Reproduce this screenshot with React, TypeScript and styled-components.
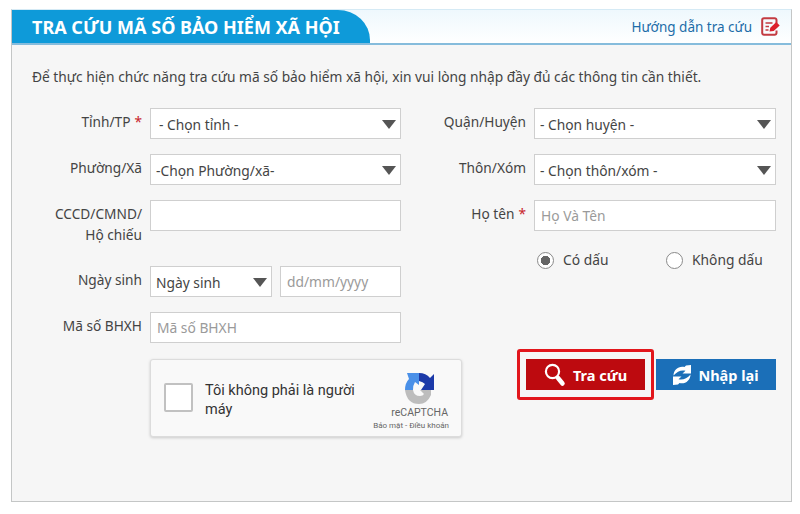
import React from 'react';
import styled, { createGlobalStyle } from 'styled-components';

const GlobalStyle = createGlobalStyle`
  html, body { margin: 0; padding: 0; background: #fff; }
  body { font-family: "Noto Sans", "Liberation Sans", sans-serif; color: #444; }
  * { box-sizing: border-box; }
`;

const Panel = styled.section`
  width: 781px;
  height: 493px;
  margin: 9px 0 0 11px;
  border: 1px solid #c4c6c6;
  border-top-color: #d5eaf5;
  background: #f6f6f6;
`;

const Header = styled.header`
  height: 33px;
  display: flex;
  justify-content: space-between;
  align-items: stretch;
  border-bottom: 2px solid #86bcdc;
  background: linear-gradient(#eef8fd, #ffffff);
  box-sizing: content-box;
`;

const Tab = styled.h1`
  width: 358px;
  margin: 0;
  padding-left: 20px;
  display: flex;
  align-items: center;
  background: #0e9ad9;
  border-top-right-radius: 32px 30px;
  color: #fff;
  font-size: 18px;
  font-weight: 700;
`;

const Guide = styled.a`
  display: flex;
  align-items: center;
  gap: 9px;
  padding-right: 11px;
  color: #1c6ca8;
  font-size: 13.5px;
`;

const Body = styled.div`
  padding: 22px 15px 0 20px;
`;

const Intro = styled.p`
  margin: 0 0 21px;
  height: 20px;
  font-size: 13.75px;
  line-height: 20px;
  color: #444;
`;

const Columns = styled.div`
  display: grid;
  grid-template-columns: 369px 375px;
`;

const Column = styled.div`
  display: flex;
  flex-direction: column;
  gap: 15px;
`;

const Row = styled.div<{ $label: number; $tall?: boolean }>`
  display: grid;
  grid-template-columns: ${(p) => p.$label}px 1fr;
  column-gap: 8px;
  height: ${(p) => (p.$tall ? 51 : 31)}px;
`;

const Label = styled.label`
  text-align: right;
  font-size: 13.7px;
  line-height: 21px;
  padding-top: 3px;
  color: #444;
`;

const Required = styled.span`
  color: #c8242b;
  margin-left: 4px;
`;

const TextInput = styled.input`
  width: 100%;
  height: 31px;
  padding: 0 6px;
  border: 1px solid #cfcfcf;
  background: #fff;
  font: 13.8px "Noto Sans", sans-serif;
  color: #444;
  outline: none;
  &::placeholder { color: #9a9a9a; opacity: 1; }
`;

const SelectWrap = styled.div`
  position: relative;
  height: 31px;
  &::after {
    content: '';
    position: absolute;
    right: 5px;
    top: 12px;
    border-left: 7.5px solid transparent;
    border-right: 7.5px solid transparent;
    border-top: 9px solid #555;
    pointer-events: none;
  }
`;

const Select = styled.select<{ $inset?: number }>`
  width: 100%;
  height: 31px;
  padding: 1px ${(p) => p.$inset ?? 5}px 0;
  appearance: none;
  border: 1px solid #cfcfcf;
  border-radius: 0;
  background: #fff;
  font: 13.8px "Noto Sans", sans-serif;
  color: #444;
`;

const DateFields = styled.div`
  display: grid;
  grid-template-columns: 122px 121px;
  column-gap: 8px;
`;

const Captcha = styled.div`
  width: 312px;
  height: 78px;
  margin: 1px 0 0 118px;
  display: flex;
  align-items: flex-start;
  padding: 0 12px 0 13px;
  background: #f9f9f9;
  border: 1px solid #dcdcdc;
  border-radius: 3px;
  box-shadow: 0 1px 3px rgba(0, 0, 0, 0.18);
`;

const CaptchaBox = styled.span`
  flex: none;
  width: 29px;
  height: 29px;
  margin-top: 23px;
  background: #fff;
  border: 2px solid #c1c1c1;
  border-radius: 2px;
`;

const CaptchaText = styled.span`
  width: 160px;
  flex: none;
  margin: 21px 0 0 12px;
  font: 14.5px/19px Roboto, "Liberation Sans", sans-serif;
  color: #333;
`;

const CaptchaBrand = styled.div`
  flex: 1;
  display: flex;
  flex-direction: column;
  align-items: flex-end;
  margin-top: 12px;
  color: #666;
`;

const BrandLogo = styled.svg`
  margin-right: 13px;
`;

const BrandName = styled.span`
  font: 10.5px/13px Roboto, "Liberation Sans", sans-serif;
  margin: 1px 1px 0 0;
`;

const BrandLinks = styled.span`
  font: 8px/10px Roboto, "Liberation Sans", sans-serif;
  margin-top: 2px;
  white-space: nowrap;
`;

const RadioRow = styled.div`
  display: flex;
  height: 22px;
  margin: 3px 0 0 136px;
  font-size: 13.8px;
  line-height: 22px;
`;

const RadioOption = styled.span<{ $width: number }>`
  display: flex;
  align-items: center;
  gap: 9px;
  width: ${(p) => p.$width}px;
  color: #444;
`;

const RadioDot = styled.span<{ $on?: boolean }>`
  width: 17px;
  height: 17px;
  border-radius: 50%;
  border: 1.5px solid #8a8a8a;
  background: ${(p) => (p.$on ? 'radial-gradient(circle, #666 0 4.5px, #fff 5px)' : '#fff')};
`;

const Actions = styled.div`
  display: flex;
  justify-content: flex-end;
  align-items: center;
  gap: 2px;
  margin-top: 63px;
`;

const Highlight = styled.div`
  padding: 7px 6px;
  border: 3px solid #e2161c;
  border-radius: 3px;
`;

const ActionButton = styled.button<{ $bg: string; $width: number }>`
  display: flex;
  align-items: center;
  justify-content: center;
  gap: 7px;
  width: ${(p) => p.$width}px;
  height: 31px;
  padding: 0;
  border: 0;
  background: ${(p) => p.$bg};
  color: #fff;
  font: 700 14.5px "Noto Sans", sans-serif;
`;

const GuideIcon = () => (
  <svg width="19" height="19" viewBox="0 0 19 19" fill="none">
    <path d="M15.5 6.500V3a1.800 1.800 0 0 0-1.800-1.800H3A1.800 1.800 0 0 0 1.200 3v13A1.800 1.800 0 0 0 3 17.800h10.700a1.800 1.800 0 0 0 1.800-1.800v-2.500" stroke="#c33b42" strokeWidth="2" />
    <path d="M4.500 6h7M4.500 9.500h3.500M4.500 13h3" stroke="#c33b42" strokeWidth="1.700" />
    <path d="M8.500 14.500l.8-3.800 6-5.700 3.400 3.500-6 5.500z" fill="#dc1f2b" />
  </svg>
);

const RecaptchaLogo = () => (
  <BrandLogo width="32" height="33" viewBox="5 4 32 33">
    <path d="M6 22Q6 15 10 11L8 5H20V17L16 14Q14 17 14 22Z" fill="#4a90e8" />
    <path d="M20 5Q27 5 31 10L35 6V22H22L26 16Q24 14 20 13Z" fill="#1c3aa9" />
    <path d="M6 22H14Q15 28 21 28Q24 28 25 26L21 22H32V27Q28 36 20 36Q8 36 6 22Z" fill="#bdbdbd" />
  </BrandLogo>
);

const SearchIcon = () => (
  <svg width="22" height="24" viewBox="0 0 22 24" fill="none">
    <circle cx="8.500" cy="8.500" r="6.600" stroke="#fff" strokeWidth="2.200" />
    <path d="M14 15l4.500 5.500" stroke="#fff" strokeWidth="4.500" strokeLinecap="round" />
  </svg>
);

const RefreshSwoosh = () => (
  <path d="M.5 10.500C.5 4.500 6 .5 11.500 2L13 .5 18 0V8.500H9.500L12.500 5.800C8.500 4.500 4 6.500.5 10.500Z" />
);

const RefreshIcon = () => (
  <svg width="18" height="20" viewBox="0 0 18 20" fill="#fff">
    <RefreshSwoosh />
    <g transform="rotate(180 9 10)">
      <RefreshSwoosh />
    </g>
  </svg>
);

export default function App() {
  return (
    <>
      <GlobalStyle />
      <Panel>
        <Header>
          <Tab>TRA CỨU MÃ SỐ BẢO HIỂM XÃ HỘI</Tab>
          <Guide>
            Hướng dẫn tra cứu
            <GuideIcon />
          </Guide>
        </Header>
        <Body>
          <Intro>
            Để thực hiện chức năng tra cứu mã số bảo hiểm xã hội, xin vui lòng nhập đầy đủ các thông tin cần thiết.
          </Intro>
          <Columns>
            <Column>
              <Row $label={110}>
                <Label>Tỉnh/TP<Required>*</Required></Label>
                <SelectWrap><Select $inset={8}><option>- Chọn tỉnh -</option></Select></SelectWrap>
              </Row>
              <Row $label={110}>
                <Label>Phường/Xã</Label>
                <SelectWrap><Select><option>-Chọn Phường/xã-</option></Select></SelectWrap>
              </Row>
              <Row $label={110} $tall>
                <Label>CCCD/CMND/<br />Hộ chiếu</Label>
                <TextInput />
              </Row>
              <Row $label={110}>
                <Label>Ngày sinh</Label>
                <DateFields>
                  <SelectWrap><Select><option>Ngày sinh</option></Select></SelectWrap>
                  <TextInput placeholder="dd/mm/yyyy" />
                </DateFields>
              </Row>
              <Row $label={110}>
                <Label>Mã số BHXH</Label>
                <TextInput placeholder="Mã số BHXH" />
              </Row>
              <Captcha>
                <CaptchaBox />
                <CaptchaText>Tôi không phải là người máy</CaptchaText>
                <CaptchaBrand>
                  <RecaptchaLogo />
                  <BrandName>reCAPTCHA</BrandName>
                  <BrandLinks>Bảo mật - Điều khoản</BrandLinks>
                </CaptchaBrand>
              </Captcha>
            </Column>
            <Column>
              <Row $label={125}>
                <Label>Quận/Huyện</Label>
                <SelectWrap><Select><option>- Chọn huyện -</option></Select></SelectWrap>
              </Row>
              <Row $label={125}>
                <Label>Thôn/Xóm</Label>
                <SelectWrap><Select><option>- Chọn thôn/xóm -</option></Select></SelectWrap>
              </Row>
              <Row $label={125}>
                <Label>Họ tên<Required>*</Required></Label>
                <TextInput placeholder="Họ Và Tên" />
              </Row>
              <RadioRow>
                <RadioOption $width={129}><RadioDot $on />Có dấu</RadioOption>
                <RadioOption $width={110}><RadioDot />Không dấu</RadioOption>
              </RadioRow>
              <Actions>
                <Highlight>
                  <ActionButton $bg="#bd0a0f" $width={119}><SearchIcon />Tra cứu</ActionButton>
                </Highlight>
                <ActionButton $bg="#1b6fb8" $width={120}><RefreshIcon />Nhập lại</ActionButton>
              </Actions>
            </Column>
          </Columns>
        </Body>
      </Panel>
    </>
  );
}
